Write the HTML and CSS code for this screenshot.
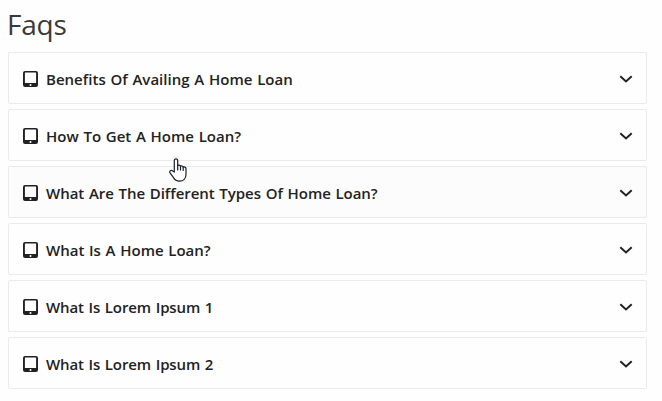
FILE: index.html
```
<!DOCTYPE html>
<html lang="en">
<head>
<meta charset="utf-8">
<title>Faqs</title>
<link rel="stylesheet" href="styles.css">
</head>
<body>
<svg class="defs" aria-hidden="true">
  <symbol id="tablet" viewBox="0 0 15 16"><path fill-rule="evenodd" d="M2 0h11a2 2 0 0 1 2 2v12a2 2 0 0 1-2 2H2a2 2 0 0 1-2-2V2a2 2 0 0 1 2-2zM2.4 1.5a.5.5 0 0 0-.5.5v9.5a.5.5 0 0 0 .5.5h10.2a.5.5 0 0 0 .5-.5V2a.5.5 0 0 0-.5-.5zM7.5 13a1 1 0 1 0 0 2 1 1 0 0 0 0-2z"/></symbol>
  <symbol id="chevron" viewBox="0 0 14 8"><path d="M1.3 1.2 7 6.4l5.7-5.2" fill="none" stroke="currentColor" stroke-width="2"/></symbol>
</svg>
<h1 class="title">Faqs</h1>
<main class="faqs">
  <div class="item"><svg class="tablet"><use href="#tablet"/></svg><span class="question q1">Benefits Of Availing A Home Loan</span><svg class="chevron"><use href="#chevron"/></svg></div>
  <div class="item"><svg class="tablet"><use href="#tablet"/></svg><span class="question q2">How To Get A Home Loan?</span><svg class="chevron"><use href="#chevron"/></svg></div>
  <div class="item shaded"><svg class="tablet"><use href="#tablet"/></svg><span class="question q3">What Are The Different Types Of Home Loan?</span><svg class="chevron"><use href="#chevron"/></svg></div>
  <div class="item"><svg class="tablet"><use href="#tablet"/></svg><span class="question q4">What Is A Home Loan?</span><svg class="chevron"><use href="#chevron"/></svg></div>
  <div class="item"><svg class="tablet"><use href="#tablet"/></svg><span class="question q5">What Is Lorem Ipsum 1</span><svg class="chevron"><use href="#chevron"/></svg></div>
  <div class="item"><svg class="tablet"><use href="#tablet"/></svg><span class="question q6">What Is Lorem Ipsum 2</span><svg class="chevron"><use href="#chevron"/></svg></div>
</main>
<svg class="pointer" viewBox="0 0 18 24"><path d="M5.3 14V2.5a1.7 1.7 0 0 1 3.4 0v5.2c.5-1 2.6-.8 2.8.6.8-.8 2.5-.4 2.7.9.9-.6 2.8-.2 2.8 1.5v5.5c0 4.2-2.6 6.9-6.5 6.9-3 0-4.7-1.2-6-3.5L1 14.9c-.9-1.6.8-3.1 2.3-2.2z"/><path d="M8.7 7.7V12M11.5 8.3V12M14.2 9.2V12.5"/></svg>
</body>
</html>
```

FILE: styles.css
```
* { box-sizing: border-box; }
body {
  margin: 0;
  padding: 5px 15px 0 8px;
  height: 401px;
  overflow: hidden;
  background: #fefefe;
  color: #212529;
  font-family: "Open Sans", "Noto Sans", sans-serif;
}
.defs { position: absolute; width: 0; height: 0; }
.title {
  margin: 0 0 0 -1px;
  height: 47px;
  font-size: 28px;
  font-weight: 400;
  line-height: 38px;
  letter-spacing: -0.2px;
  color: #3a3a3a;
}
.faqs { display: flex; flex-direction: column; gap: 5px; }
.item {
  display: flex;
  align-items: center;
  height: 52px;
  padding: 0 13px 0 14px;
  border: 1px solid #ebebeb;
  border-radius: 2px;
  background: #fefefe;
}
.shaded { background: #fcfcfc; }
.tablet { width: 15px; height: 16px; margin-right: 8px; margin-top: 2px; fill: #222; }
.question {
  flex: 1;
  font-size: 15px;
  font-weight: 600;
  line-height: 24px;
  padding-top: 1px;
  white-space: nowrap;
  word-spacing: 0.8px;
  color: #222;
}
.q1 { letter-spacing: 0.02px; }
.q2 { letter-spacing: 0.01px; }
.q3 { letter-spacing: -0.03px; }
.q5, .q6 { letter-spacing: -0.1px; }
.chevron { width: 14px; height: 8px; margin-top: 1px; color: #222; }
.pointer {
  position: absolute;
  left: 169px;
  top: 158px;
  width: 18px;
  height: 24px;
  fill: #fff;
  stroke: #16202c;
  stroke-width: 1.2;
  stroke-linejoin: round;
  stroke-linecap: round;
}
```
